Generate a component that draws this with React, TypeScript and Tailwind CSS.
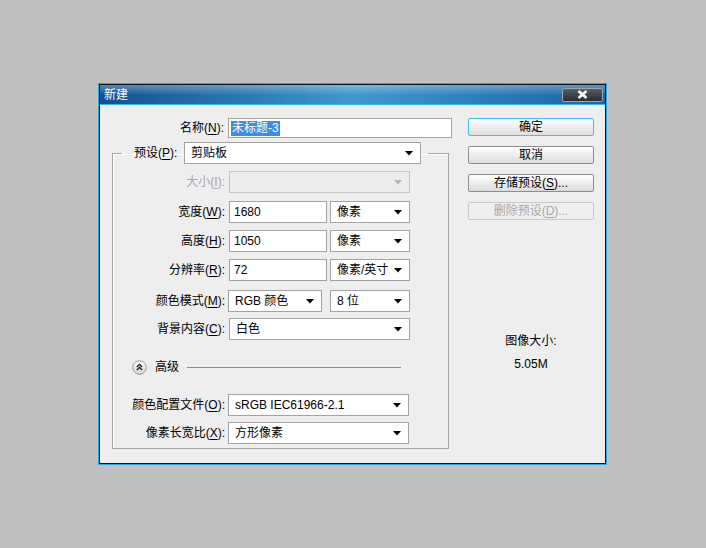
import React from 'react';

const Arrow: React.FC<{ disabled?: boolean }> = ({ disabled }) => (
  <svg width="8" height="5" viewBox="0 0 8 5" className="shrink-0">
    <path d="M0 0 L8 0 L4 4.5 Z" fill={disabled ? '#b4b4b4' : '#000'} />
  </svg>
);

const Select: React.FC<{ value?: string; w: string; disabled?: boolean; className?: string }> = ({ value, w, disabled, className = '' }) => (
  <div
    className={`${w} h-[22px] flex items-center justify-between pl-[6px] pr-[7px] border ${
      disabled ? 'border-[#c4c4c4] bg-[#ececec]' : 'border-[#a3a3a3] bg-white'
    } ${className}`}
  >
    <span className="text-[12px] text-black leading-none">{value}</span>
    <Arrow disabled={disabled} />
  </div>
);

const Input: React.FC<{ value: string; w: string }> = ({ value, w }) => (
  <div className={`${w} h-[22px] flex items-center pl-[4px] border border-[#a3a3a3] bg-white text-[12px] leading-none`}>
    {value}
  </div>
);

const Label: React.FC<{ text: string; k: string; disabled?: boolean; w?: string }> = ({ text, k, disabled, w = 'w-[112px]' }) => (
  <div className={`${w} shrink-0 text-right text-[12px] leading-none ${disabled ? 'text-[#a6a6a6]' : 'text-black'}`}>
    {text}(<span className="underline underline-offset-2">{k}</span>):
  </div>
);

const Button: React.FC<{ children: React.ReactNode; primary?: boolean; disabled?: boolean }> = ({ children, primary, disabled }) => (
  <div
    className={`h-[18px] w-[126px] flex items-center justify-center rounded-[2px] border text-[12px] leading-none ${
      primary
        ? 'border-[#3cc3ea] bg-gradient-to-b from-white to-[#dedede] text-black'
        : disabled
        ? 'border-[#c8c8c8] bg-[#efefef] text-[#a8a8a8]'
        : 'border-[#8e8e8e] bg-gradient-to-b from-white to-[#dcdcdc] text-black'
    }`}
  >
    {children}
  </div>
);

export default function App() {
  return (
    <div className="min-h-screen w-full bg-[#c0c0c0] pl-[98px] pt-[83px] font-['Liberation_Sans','Noto_Sans_CJK_SC',sans-serif]">
      <div className="w-[509px] h-[382px] border border-[#2aa6de] bg-[#0c1622] p-[1px] flex flex-col">
        {/* title bar */}
        <div className="relative h-[19px] shrink-0 flex items-center justify-between bg-gradient-to-r from-[#13508f] via-[#3f99cf] to-[#1b64a6]">
          <div className="absolute inset-x-0 top-0 h-[9px] bg-gradient-to-b from-white/30 to-white/5" />
          <span className="relative pl-[4px] text-[12px] leading-none text-white">新建</span>
          <div className="relative mr-[2px] w-[41px] h-[14px] rounded-[2px] border border-[#9aa6ae] bg-gradient-to-b from-[#5a5f63] to-[#2a2d30] flex items-center justify-center">
            <svg width="11" height="9" viewBox="0 0 11 9">
              <path d="M1.5 1 L9.5 8 M9.5 1 L1.5 8" stroke="#fff" strokeWidth="2.6" />
            </svg>
          </div>
        </div>
        <div className="h-[1px] bg-[#38b4e6] shrink-0" />

        {/* body */}
        <div className="flex-1 bg-[#eeeeee] flex pl-[12px] pt-[13px]">
          {/* left column */}
          <div className="w-[341px] shrink-0">
            <div className="flex items-center h-[20px]">
              <Label text="名称" k="N" w="w-[112px]" />
              <div className="ml-[4px] w-[224px] h-[20px] flex items-center pl-[2px] border border-[#a3a3a3] bg-white">
                <span className="bg-[#3b8ee2] text-white text-[12px] leading-[15px] px-[1px]">未标题-3</span>
              </div>
            </div>

            <fieldset className="mt-[4px] w-[337px] border border-[#a6a6a6] pb-[4px] shadow-[inset_1px_1px_0_#ffffff]">
              <legend className="ml-[9px] pl-[12px] pr-[7px]">
                <div className="flex items-center">
                  <span className="text-[12px] leading-none text-black w-[46px]">
                    预设(<span className="underline underline-offset-2">P</span>):
                  </span>
                  <Select value="剪贴板" w="w-[237px]" className="ml-[4px]" />
                </div>
              </legend>

              <div className="mt-[7px] flex items-center">
                <Label text="大小" k="I" disabled />
                <Select w="w-[181px]" disabled className="ml-[4px]" />
              </div>

              <div className="mt-[8px] flex items-center">
                <Label text="宽度" k="W" />
                <Input value="1680" w="w-[98px] ml-[4px]" />
                <Select value="像素" w="w-[80px]" className="ml-[3px]" />
              </div>

              <div className="mt-[7px] flex items-center">
                <Label text="高度" k="H" />
                <Input value="1050" w="w-[98px] ml-[4px]" />
                <Select value="像素" w="w-[80px]" className="ml-[3px]" />
              </div>

              <div className="mt-[7px] flex items-center">
                <Label text="分辨率" k="R" />
                <Input value="72" w="w-[98px] ml-[4px]" />
                <Select value="像素/英寸" w="w-[80px]" className="ml-[3px]" />
              </div>

              <div className="mt-[9px] flex items-center">
                <Label text="颜色模式" k="M" />
                <Select value="RGB 颜色" w="w-[94px]" className="ml-[3px]" />
                <Select value="8 位" w="w-[80px]" className="ml-[8px]" />
              </div>

              <div className="mt-[6px] flex items-center">
                <Label text="背景内容" k="C" />
                <Select value="白色" w="w-[181px]" className="ml-[4px]" />
              </div>

              <div className="mt-[20px] h-[14px] flex items-center">
                <svg width="15" height="15" viewBox="0 0 15 15" className="ml-[19px] shrink-0">
                  <defs>
                    <linearGradient id="adv" x1="0" y1="0" x2="0" y2="1">
                      <stop offset="0" stopColor="#ffffff" />
                      <stop offset="1" stopColor="#d4d4d4" />
                    </linearGradient>
                  </defs>
                  <circle cx="7.5" cy="7.5" r="6.8" fill="url(#adv)" stroke="#9a9a9a" />
                  <path d="M4.8 7 L7.5 4.5 L10.2 7 M4.8 10 L7.5 7.5 L10.2 10" fill="none" stroke="#222" strokeWidth="1.3" />
                </svg>
                <span className="ml-[8px] text-[12px] leading-none text-black">高级</span>
                <div className="ml-[8px] w-[214px] h-[1px] bg-[#8c8c8c]" />
              </div>

              <div className="mt-[20px] flex items-center">
                <Label text="颜色配置文件" k="O" />
                <Select value="sRGB IEC61966-2.1" w="w-[181px]" className="ml-[3px]" />
              </div>

              <div className="mt-[6px] flex items-center">
                <Label text="像素长宽比" k="X" />
                <Select value="方形像素" w="w-[181px]" className="ml-[3px]" />
              </div>
            </fieldset>
          </div>

          {/* right column */}
          <div className="ml-[15px] w-[126px] flex flex-col">
            <div className="flex flex-col gap-[10px]">
              <Button primary>确定</Button>
              <Button>取消</Button>
              <Button>
                存储预设(<span className="underline underline-offset-2">S</span>)...
              </Button>
              <Button disabled>
                删除预设(<span className="underline underline-offset-2">D</span>)...
              </Button>
            </div>
            <div className="mt-[113px] text-center text-[12px] leading-[16px] text-black">图像大小:</div>
            <div className="mt-[7px] text-center text-[12px] leading-[16px] text-black">5.05M</div>
          </div>
        </div>
      </div>
    </div>
  );
}
